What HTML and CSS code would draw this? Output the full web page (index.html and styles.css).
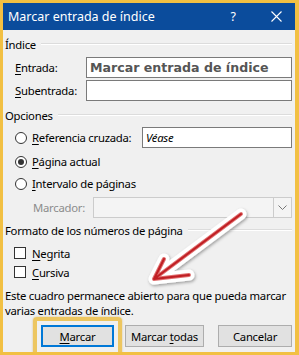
FILE: index.html
```html
<!DOCTYPE html>
<html lang="es">
<head>
<meta charset="utf-8">
<title>Marcar entrada de índice</title>
<link rel="stylesheet" href="styles.css">
</head>
<body>
<div class="frame">
  <div class="titlebar">
    <span class="title">Marcar entrada de índice</span>
    <span class="help">?</span>
    <svg class="close" width="11" height="11" viewBox="0 0 11 11"><path d="M0.5 0.5 L10.5 10.5 M10.5 0.5 L0.5 10.5" stroke="#fff" stroke-width="1.1" fill="none"/></svg>
  </div>
  <div class="content">
    <div class="group g1"><span>Índice</span><i class="rule"></i></div>
    <div class="field f-entrada"><span class="lbl"><u>E</u>ntrada:</span><div class="input strong">Marcar entrada de índice</div></div>
    <div class="field f-sub"><span class="lbl"><u>S</u>ubentrada:</span><div class="input"></div></div>
    <div class="group g2"><span>Opciones</span><i class="rule"></i></div>
    <div class="opt o1"><span class="radio"></span><span class="otext"><u>R</u>eferencia cruzada:</span><div class="input ref">Véase</div></div>
    <div class="opt o2"><span class="radio on"></span><span class="otext"><u>P</u>ágina actual</span></div>
    <div class="opt o3"><span class="radio"></span><span class="otext"><u>I</u>ntervalo de páginas</span></div>
    <div class="field f-marc"><span class="lbl dis">Marcador:</span><div class="select"><span class="chev"><svg width="9" height="6" viewBox="0 0 9 6"><path d="M0.5 0.5 L4.5 4.5 L8.5 0.5" stroke="#777" stroke-width="1" fill="none"/></svg></span></div></div>
    <div class="group g3"><span>Formato de los números de página</span><i class="rule"></i></div>
    <div class="chk c1"><span class="box"></span><span class="otext"><u>N</u>egrita</span></div>
    <div class="chk c2"><span class="box"></span><span class="otext"><u>C</u>ursiva</span></div>
    <p class="note">Este cuadro permanece abierto para que pueda marcar<br>varias entradas de índice.</p>
    <div class="buttons">
      <button class="btn primary b1"><u>M</u>arcar</button>
      <button class="btn b2">Marcar <u>t</u>odas</button>
      <button class="btn b3">Cancelar</button>
    </div>
  </div>
  <div class="highlight"></div>
  <svg class="arrow" width="299" height="355" viewBox="0 0 299 355">
    <defs>
      <filter id="sh" x="-20%" y="-20%" width="140%" height="140%">
        <feDropShadow dx="1" dy="1.5" stdDeviation="1.6" flood-color="#000" flood-opacity="0.35"/>
      </filter>
    </defs>
    <g fill="none" stroke-linecap="round" stroke-linejoin="round">
      <path d="M241 214 L154 279 M154 279 L164 259 M154 279 L189 275" stroke="#fff" stroke-width="11" filter="url(#sh)"/>
      <path d="M241 214 L154 279 M154 279 L164 259 M154 279 L189 275" stroke="#e07070" stroke-width="4"/>
      <path d="M241 214 L154 279 M154 279 L164 259 M154 279 L189 275" stroke="#c01f24" stroke-width="2"/>
    </g>
  </svg>
</div>
</body>
</html>
```
FILE: styles.css
```css
html, body {
  margin: 0;
  padding: 0;
  background: #fff;
}
.frame {
  position: relative;
  width: 299px;
  height: 355px;
  box-sizing: border-box;
  border-style: solid;
  border-color: #f2c043;
  border-width: 3px 4px 3px 3px;
  background: #f0f0f0;
  font-family: "Noto Sans", "Open Sans", sans-serif;
  font-size: 11.3px;
  letter-spacing: -0.25px;
  color: #000;
  overflow: hidden;
}
.titlebar {
  height: 27px;
  background: #0b4c9c;
  display: flex;
  align-items: center;
  color: #fff;
  padding-left: 5px;
  letter-spacing: 0;
}
.title {
  font-size: 12.5px;
  flex: 1;
}
.help {
  font-size: 12.5px;
  margin-right: 35px;
}
.close {
  margin-right: 13px;
}
.content {
  display: flex;
  flex-direction: column;
  padding: 0 3px 0 2px;
}
.group {
  display: flex;
  align-items: center;
  height: 16px;
}
.rule {
  flex: 1;
  height: 0;
  border-top: 1px solid #dcdcdc;
  border-bottom: 1px solid #fff;
  margin-left: 5px;
}
.g1 { margin-top: 6px; }
.g2 { margin-top: 6px; }
.g3 { margin-top: 4px; }
.field {
  display: flex;
  align-items: center;
  height: 21px;
  padding-left: 10px;
}
.f-entrada { margin-top: 5px; }
.f-sub { margin-top: 2px; }
.f-marc { margin-top: 3px; padding-left: 28px; }
.lbl {
  width: 71px;
  flex: none;
}
.f-marc .lbl { width: 60px; }
.dis { color: #8c8c8c; }
u { text-decoration-thickness: 1px; text-underline-offset: 2px; }
.input {
  flex: 1;
  height: 21px;
  box-sizing: border-box;
  border: 1px solid #7a7a7a;
  background: #fff;
  display: flex;
  align-items: center;
  padding-left: 3px;
  white-space: nowrap;
  overflow: hidden;
}
.strong {
  font-family: "DejaVu Sans", sans-serif;
  font-weight: bold;
  font-size: 12.6px;
  letter-spacing: 0;
  color: #555;
}
.ref {
  flex: none;
  width: 150px;
  margin-left: auto;
  font-style: italic;
}
.opt {
  display: flex;
  align-items: center;
  height: 21px;
  padding-left: 10px;
}
.o1 { margin-top: 4px; }
.o2 { margin-top: 3px; }
.o3 { margin-top: 1px; }
.radio {
  width: 12px;
  height: 12px;
  box-sizing: border-box;
  border: 1px solid #333;
  border-radius: 50%;
  background: #fff;
  flex: none;
  display: flex;
  align-items: center;
  justify-content: center;
}
.radio.on::after {
  content: "";
  width: 6px;
  height: 6px;
  border-radius: 50%;
  background: #333;
}
.otext { margin-left: 5px; }
.select {
  flex: 1;
  height: 21px;
  box-sizing: border-box;
  border: 1px solid #cccccc;
  background: #f4f4f4;
  display: flex;
  justify-content: flex-end;
}
.chev {
  width: 17px;
  border-left: 1px solid #cccccc;
  display: flex;
  align-items: center;
  justify-content: center;
}
.chk {
  display: flex;
  align-items: center;
  padding-left: 9px;
}
.c1 { margin-top: 5px; height: 20px; }
.c2 { height: 18px; }
.chk .otext { margin-left: 6px; }
.box {
  width: 12px;
  height: 12px;
  box-sizing: border-box;
  border: 1px solid #333;
  background: #fff;
  flex: none;
}
.note {
  margin: 7px 0 0 0;
  line-height: 15px;
  white-space: nowrap;
}
.buttons {
  display: flex;
  margin-top: 7px;
  padding-left: 36px;
}
.btn {
  height: 22px;
  box-sizing: border-box;
  border: 1px solid #adadad;
  background: #e1e1e1;
  font-family: inherit;
  font-size: 11.3px;
  letter-spacing: -0.25px;
  color: #000;
  padding: 0;
}
.primary {
  border: 2px solid #0078d7;
}
.b1 { width: 73px; }
.b2 { width: 79px; margin-left: 11px; }
.b3 { width: 74px; margin-left: 14px; }
.highlight {
  position: absolute;
  left: 30px;
  top: 314px;
  width: 89px;
  height: 42px;
  box-sizing: border-box;
  border: 4px solid rgba(236, 190, 70, 0.85);
  border-radius: 4px;
  box-shadow: 0 0 2px rgba(200, 150, 40, 0.6);
}
.arrow {
  position: absolute;
  left: -3px;
  top: -3px;
  pointer-events: none;
}
```
